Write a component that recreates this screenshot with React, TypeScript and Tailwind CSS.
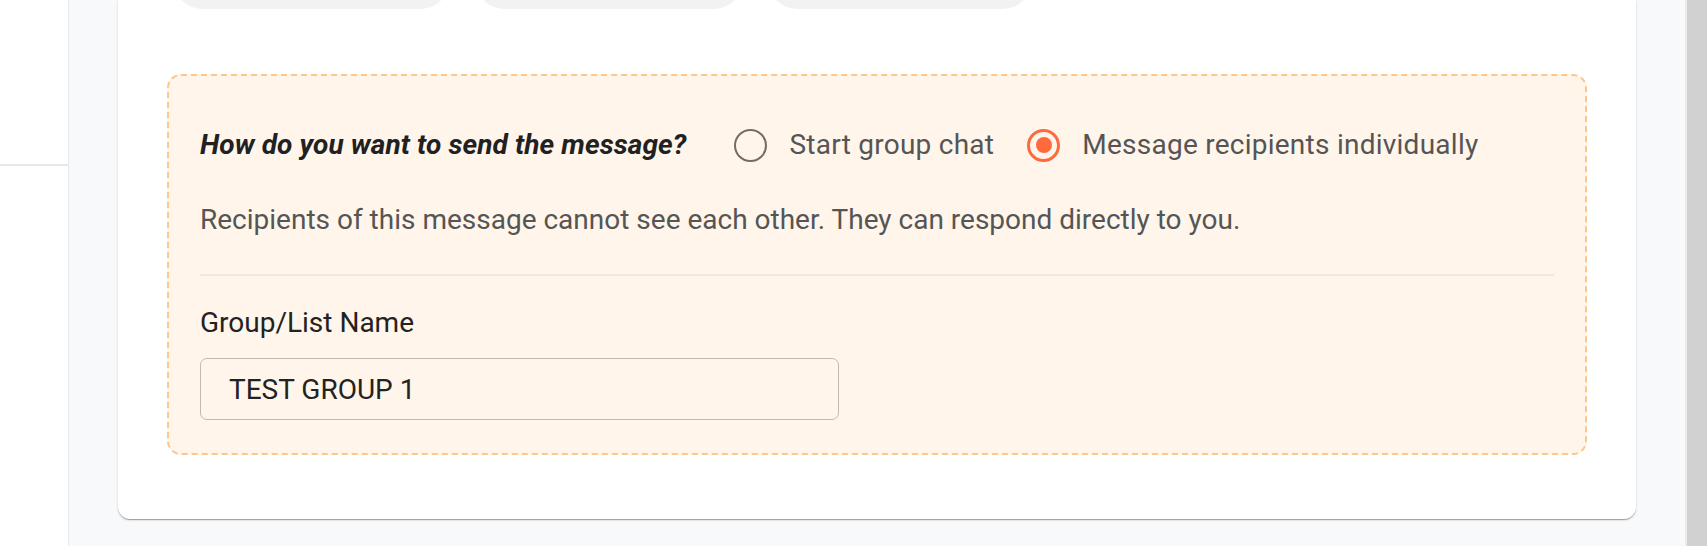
import { useState } from "react";

type Mode = "group" | "individual";

function Radio({ checked, label, onSelect }: { checked: boolean; label: string; onSelect: () => void }) {
  return (
    <button type="button" onClick={onSelect} className="flex items-center gap-[22px]">
      {checked ? (
        <span className="flex h-[33px] w-[33px] items-center justify-center rounded-full border-[3px] border-[#ff6a3d]">
          <span className="h-[16px] w-[16px] rounded-full bg-[#ff6a3d]" />
        </span>
      ) : (
        <span className="h-[33px] w-[33px] rounded-full border-[2.5px] border-[#736d68]" />
      )}
      <span className="text-[28px] leading-[40px] tracking-[0.25px] text-[#555555]">{label}</span>
    </button>
  );
}

export default function App() {
  const [mode, setMode] = useState<Mode>("individual");
  const [name, setName] = useState("TEST GROUP 1");

  return (
    <div className="flex h-[546px] w-[1707px] overflow-hidden font-[Roboto,sans-serif]">
      <aside className="w-[69px] shrink-0 border-r border-[#e9e9e9] bg-white">
        <div className="h-[166px] border-b-2 border-[#e8e8e8]" />
      </aside>

      <main className="flex-1 bg-[#f8f9fa] px-[49px]">
        <section className="h-[519px] rounded-b-[12px] bg-white px-[49px] shadow-[0_2px_1px_-1px_rgba(0,0,0,0.2),0_1px_1px_0_rgba(0,0,0,0.14),0_1px_3px_0_rgba(0,0,0,0.12)]">
          <div className="flex h-[9px] items-end gap-[27px] overflow-hidden pl-[7px]">
            <div className="h-[56px] w-[275px] shrink-0 rounded-[28px] bg-[#f2f2f2]" />
            <div className="h-[56px] w-[266px] shrink-0 rounded-[28px] bg-[#f2f2f2]" />
            <div className="h-[56px] w-[262px] shrink-0 rounded-[28px] bg-[#f2f2f2]" />
          </div>

          <div className="mt-[65px] rounded-[14px] border-2 border-dashed border-[#fdc78c] bg-[#fff5eb] px-[31px] pb-[33px] pt-[49px]">
            <div className="flex h-[40px] items-center">
              <span className="text-[28px] font-bold italic leading-[40px] tracking-[0.1px] text-[#212121]">
                How do you want to send the message?
              </span>
              <div className="ml-[48px] flex items-center gap-[33px]">
                <Radio checked={mode === "group"} label="Start group chat" onSelect={() => setMode("group")} />
                <Radio
                  checked={mode === "individual"}
                  label="Message recipients individually"
                  onSelect={() => setMode("individual")}
                />
              </div>
            </div>

            <p className="mt-[35px] text-[28px] leading-[40px] text-[#555555]">
              {mode === "individual"
                ? "Recipients of this message cannot see each other. They can respond directly to you."
                : "Recipients of this message can see each other and reply to the whole group."}
            </p>

            <div className="mt-[34px] h-[2px] bg-[#f1e7dd]" />

            <label htmlFor="group-name" className="mt-[27px] block text-[28px] leading-[40px] text-[#222222]">
              Group/List Name
            </label>
            <input
              id="group-name"
              value={name}
              onChange={(e) => setName(e.target.value)}
              className="mt-[15px] block h-[62px] w-[639px] rounded-[7px] border-[1.5px] border-[#c2b9b0] bg-transparent pl-[28px] text-[28px] text-[#222222] outline-none"
            />
          </div>
        </section>
      </main>

      <div className="w-[22px] shrink-0 border-l-2 border-[#ececec] bg-[#d1d1d1]" />
    </div>
  );
}
